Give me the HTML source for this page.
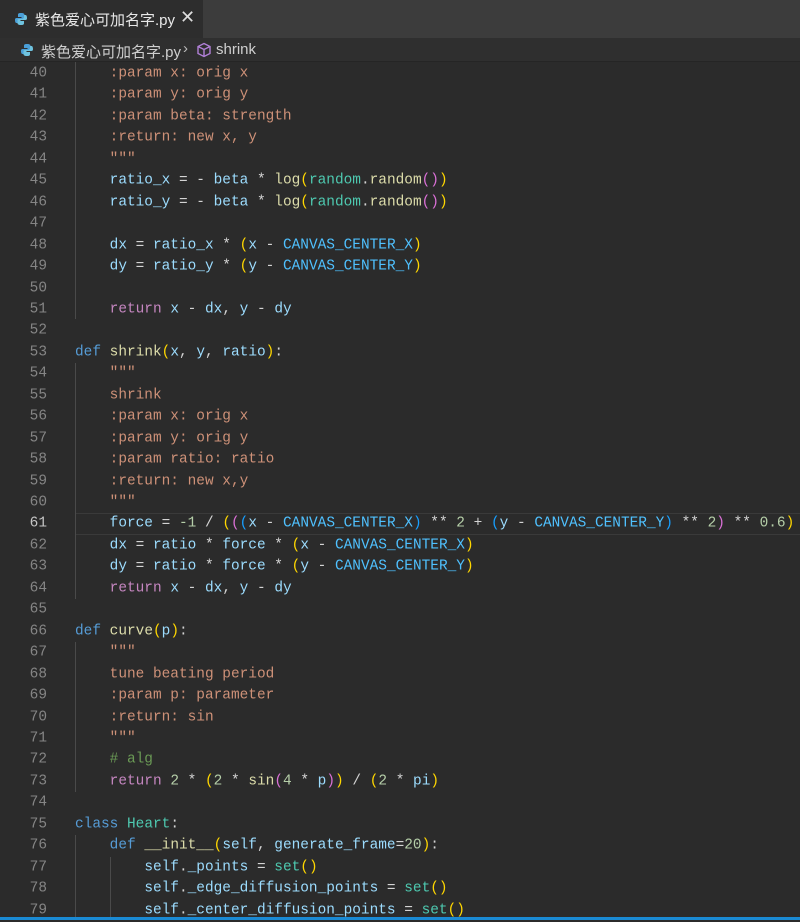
<!DOCTYPE html>
<html><head><meta charset="utf-8"><style>
*{margin:0;padding:0;box-sizing:border-box}
body{width:800px;height:920px;background:#2b2b2b;overflow:hidden;position:relative;font-family:"Liberation Sans","Noto Sans CJK SC",sans-serif}
.tabbar{position:absolute;left:0;top:0;width:800px;height:38px;background:#3c3c3c}
.tab{position:absolute;left:0;top:0;width:203px;height:38px;background:#2d2d2d;color:#e8e8e8;font-size:15px}
.bc{position:absolute;left:0;top:38px;width:800px;height:24px;background:#2f2f2f;color:#cfcfcf;font-size:15px;border-bottom:1px solid #252525}
.ln{position:absolute;left:0;width:47px;text-align:right;color:#858585;font-family:"Liberation Mono",monospace;font-size:14.45px;height:21.45px;line-height:21.45px;transform:translateY(1.5px)}
.cd{position:absolute;left:75px;white-space:pre;color:#d4d4d4;font-family:"Liberation Mono",monospace;font-size:14.45px;height:21.45px;line-height:21.45px;transform:translateY(1.5px)}
.v{color:#9cdcfe}.s{color:#ce9178}.k{color:#569cd6}.r{color:#c586c0}.f{color:#dcdcaa}.c{color:#4fc1ff}.t{color:#4ec9b0}.n{color:#b5cea8}.g{color:#6a9955}
.b1{color:#ffd700}.b2{color:#da70d6}.b3{color:#179fff}
.gd{position:absolute;width:1px;background:#4a4a4a}
</style></head><body>
<div class="tabbar"><div class="tab">
<svg style="position:absolute;left:14px;top:12px" width="14" height="14" viewBox="0 0 14 14"><path d="M7 1C4 1 4 2 4 3v2h3.5v1H2.5C1 6 1 7.5 1 8s0 3 1.5 3H4V9c0-1 1-2 2-2h3c1 0 1.5-.5 1.5-1.5V3C10.5 2 10 1 7 1z" fill="#4a9fd8"/><path d="M7 13c3 0 3-1 3-2V9H6.5V8h5C13 8 13 6.5 13 6s0-3-1.5-3H10v2c0 1-1 2-2 2H5c-1 0-1.5.5-1.5 1.5V11c0 1 .5 2 3.5 2z" fill="#6fc3df"/></svg>
<span style="position:absolute;left:35px;top:9px">紫色爱心可加名字.py</span>
<span style="position:absolute;left:180px;top:7px;font-size:18px;color:#ddd">✕</span>
</div></div>
<div class="bc">
<svg style="position:absolute;left:20px;top:5px" width="14" height="14" viewBox="0 0 14 14"><path d="M7 1C4 1 4 2 4 3v2h3.5v1H2.5C1 6 1 7.5 1 8s0 3 1.5 3H4V9c0-1 1-2 2-2h3c1 0 1.5-.5 1.5-1.5V3C10.5 2 10 1 7 1z" fill="#4a9fd8"/><path d="M7 13c3 0 3-1 3-2V9H6.5V8h5C13 8 13 6.5 13 6s0-3-1.5-3H10v2c0 1-1 2-2 2H5c-1 0-1.5.5-1.5 1.5V11c0 1 .5 2 3.5 2z" fill="#6fc3df"/></svg>
<span style="position:absolute;left:41px;top:3px">紫色爱心可加名字.py</span>
<span style="position:absolute;left:183px;top:2px;color:#bbb">›</span>
<svg style="position:absolute;left:196px;top:4px" width="16" height="16" viewBox="0 0 16 16" fill="none" stroke="#b180d7" stroke-width="1.4"><path d="M8 1.5L14 4.5V11.5L8 14.5L2 11.5V4.5Z"/><path d="M2 4.5L8 7.5L14 4.5M8 7.5V14.5"/></svg>
<span style="position:absolute;left:216px;top:3px">shrink</span>
</div>

<div style="position:absolute;left:75px;top:513px;width:725px;height:22px;border-top:1px solid #3a3a3a;border-bottom:1px solid #3a3a3a"></div>

<div class="gd" style="left:75px;top:62px;height:257px"></div>
<div class="gd" style="left:75px;top:363px;height:236px"></div>
<div class="gd" style="left:75px;top:642px;height:150px"></div>
<div class="gd" style="left:75px;top:835px;height:85px"></div>
<div class="gd" style="left:110px;top:857px;height:63px"></div>

<div class="ln" style="top:62px">40</div><div class="cd" style="top:62px">    <span class="s">:param x: orig x</span></div>
<div class="ln" style="top:83.45px">41</div><div class="cd" style="top:83.45px">    <span class="s">:param y: orig y</span></div>
<div class="ln" style="top:104.9px">42</div><div class="cd" style="top:104.9px">    <span class="s">:param beta: strength</span></div>
<div class="ln" style="top:126.35px">43</div><div class="cd" style="top:126.35px">    <span class="s">:return: new x, y</span></div>
<div class="ln" style="top:147.8px">44</div><div class="cd" style="top:147.8px">    <span class="s">"""</span></div>
<div class="ln" style="top:169.25px">45</div><div class="cd" style="top:169.25px">    <span class="v">ratio_x</span> = - <span class="v">beta</span> * <span class="f">log</span><span class="b1">(</span><span class="t">random</span>.<span class="f">random</span><span class="b2">()</span><span class="b1">)</span></div>
<div class="ln" style="top:190.7px">46</div><div class="cd" style="top:190.7px">    <span class="v">ratio_y</span> = - <span class="v">beta</span> * <span class="f">log</span><span class="b1">(</span><span class="t">random</span>.<span class="f">random</span><span class="b2">()</span><span class="b1">)</span></div>
<div class="ln" style="top:212.15px">47</div>
<div class="ln" style="top:233.6px">48</div><div class="cd" style="top:233.6px">    <span class="v">dx</span> = <span class="v">ratio_x</span> * <span class="b1">(</span><span class="v">x</span> - <span class="c">CANVAS_CENTER_X</span><span class="b1">)</span></div>
<div class="ln" style="top:255.05px">49</div><div class="cd" style="top:255.05px">    <span class="v">dy</span> = <span class="v">ratio_y</span> * <span class="b1">(</span><span class="v">y</span> - <span class="c">CANVAS_CENTER_Y</span><span class="b1">)</span></div>
<div class="ln" style="top:276.5px">50</div>
<div class="ln" style="top:297.95px">51</div><div class="cd" style="top:297.95px">    <span class="r">return</span> <span class="v">x</span> - <span class="v">dx</span>, <span class="v">y</span> - <span class="v">dy</span></div>
<div class="ln" style="top:319.4px">52</div>
<div class="ln" style="top:340.85px">53</div><div class="cd" style="top:340.85px"><span class="k">def</span> <span class="f">shrink</span><span class="b1">(</span><span class="v">x</span>, <span class="v">y</span>, <span class="v">ratio</span><span class="b1">)</span>:</div>
<div class="ln" style="top:362.3px">54</div><div class="cd" style="top:362.3px">    <span class="s">"""</span></div>
<div class="ln" style="top:383.75px">55</div><div class="cd" style="top:383.75px">    <span class="s">shrink</span></div>
<div class="ln" style="top:405.2px">56</div><div class="cd" style="top:405.2px">    <span class="s">:param x: orig x</span></div>
<div class="ln" style="top:426.65px">57</div><div class="cd" style="top:426.65px">    <span class="s">:param y: orig y</span></div>
<div class="ln" style="top:448.1px">58</div><div class="cd" style="top:448.1px">    <span class="s">:param ratio: ratio</span></div>
<div class="ln" style="top:469.55px">59</div><div class="cd" style="top:469.55px">    <span class="s">:return: new x,y</span></div>
<div class="ln" style="top:491px">60</div><div class="cd" style="top:491px">    <span class="s">"""</span></div>
<div class="ln" style="top:512.45px;color:#c6c6c6">61</div><div class="cd" style="top:512.45px">    <span class="v">force</span> = <span class="n">-1</span> / <span class="b1">(</span><span class="b2">(</span><span class="b3">(</span><span class="v">x</span> - <span class="c">CANVAS_CENTER_X</span><span class="b3">)</span> ** <span class="n">2</span> + <span class="b3">(</span><span class="v">y</span> - <span class="c">CANVAS_CENTER_Y</span><span class="b3">)</span> ** <span class="n">2</span><span class="b2">)</span> ** <span class="n">0.6</span><span class="b1">)</span></div>
<div class="ln" style="top:533.9px">62</div><div class="cd" style="top:533.9px">    <span class="v">dx</span> = <span class="v">ratio</span> * <span class="v">force</span> * <span class="b1">(</span><span class="v">x</span> - <span class="c">CANVAS_CENTER_X</span><span class="b1">)</span></div>
<div class="ln" style="top:555.35px">63</div><div class="cd" style="top:555.35px">    <span class="v">dy</span> = <span class="v">ratio</span> * <span class="v">force</span> * <span class="b1">(</span><span class="v">y</span> - <span class="c">CANVAS_CENTER_Y</span><span class="b1">)</span></div>
<div class="ln" style="top:576.8px">64</div><div class="cd" style="top:576.8px">    <span class="r">return</span> <span class="v">x</span> - <span class="v">dx</span>, <span class="v">y</span> - <span class="v">dy</span></div>
<div class="ln" style="top:598.25px">65</div>
<div class="ln" style="top:619.7px">66</div><div class="cd" style="top:619.7px"><span class="k">def</span> <span class="f">curve</span><span class="b1">(</span><span class="v">p</span><span class="b1">)</span>:</div>
<div class="ln" style="top:641.15px">67</div><div class="cd" style="top:641.15px">    <span class="s">"""</span></div>
<div class="ln" style="top:662.6px">68</div><div class="cd" style="top:662.6px">    <span class="s">tune beating period</span></div>
<div class="ln" style="top:684.05px">69</div><div class="cd" style="top:684.05px">    <span class="s">:param p: parameter</span></div>
<div class="ln" style="top:705.5px">70</div><div class="cd" style="top:705.5px">    <span class="s">:return: sin</span></div>
<div class="ln" style="top:726.95px">71</div><div class="cd" style="top:726.95px">    <span class="s">"""</span></div>
<div class="ln" style="top:748.4px">72</div><div class="cd" style="top:748.4px">    <span class="g"># alg</span></div>
<div class="ln" style="top:769.85px">73</div><div class="cd" style="top:769.85px">    <span class="r">return</span> <span class="n">2</span> * <span class="b1">(</span><span class="n">2</span> * <span class="f">sin</span><span class="b2">(</span><span class="n">4</span> * <span class="v">p</span><span class="b2">)</span><span class="b1">)</span> / <span class="b1">(</span><span class="n">2</span> * <span class="v">pi</span><span class="b1">)</span></div>
<div class="ln" style="top:791.3px">74</div>
<div class="ln" style="top:812.75px">75</div><div class="cd" style="top:812.75px"><span class="k">class</span> <span class="t">Heart</span>:</div>
<div class="ln" style="top:834.2px">76</div><div class="cd" style="top:834.2px">    <span class="k">def</span> <span class="f">__init__</span><span class="b1">(</span><span class="v">self</span>, <span class="v">generate_frame</span>=<span class="n">20</span><span class="b1">)</span>:</div>
<div class="ln" style="top:855.65px">77</div><div class="cd" style="top:855.65px">        <span class="v">self</span>.<span class="v">_points</span> = <span class="t">set</span><span class="b1">()</span></div>
<div class="ln" style="top:877.1px">78</div><div class="cd" style="top:877.1px">        <span class="v">self</span>.<span class="v">_edge_diffusion_points</span> = <span class="t">set</span><span class="b1">()</span></div>
<div class="ln" style="top:898.55px">79</div><div class="cd" style="top:898.55px">        <span class="v">self</span>.<span class="v">_center_diffusion_points</span> = <span class="t">set</span><span class="b1">()</span></div>

<div style="position:absolute;left:0;top:917px;width:800px;height:3px;background:#1a8ad4"></div>
</body></html>
